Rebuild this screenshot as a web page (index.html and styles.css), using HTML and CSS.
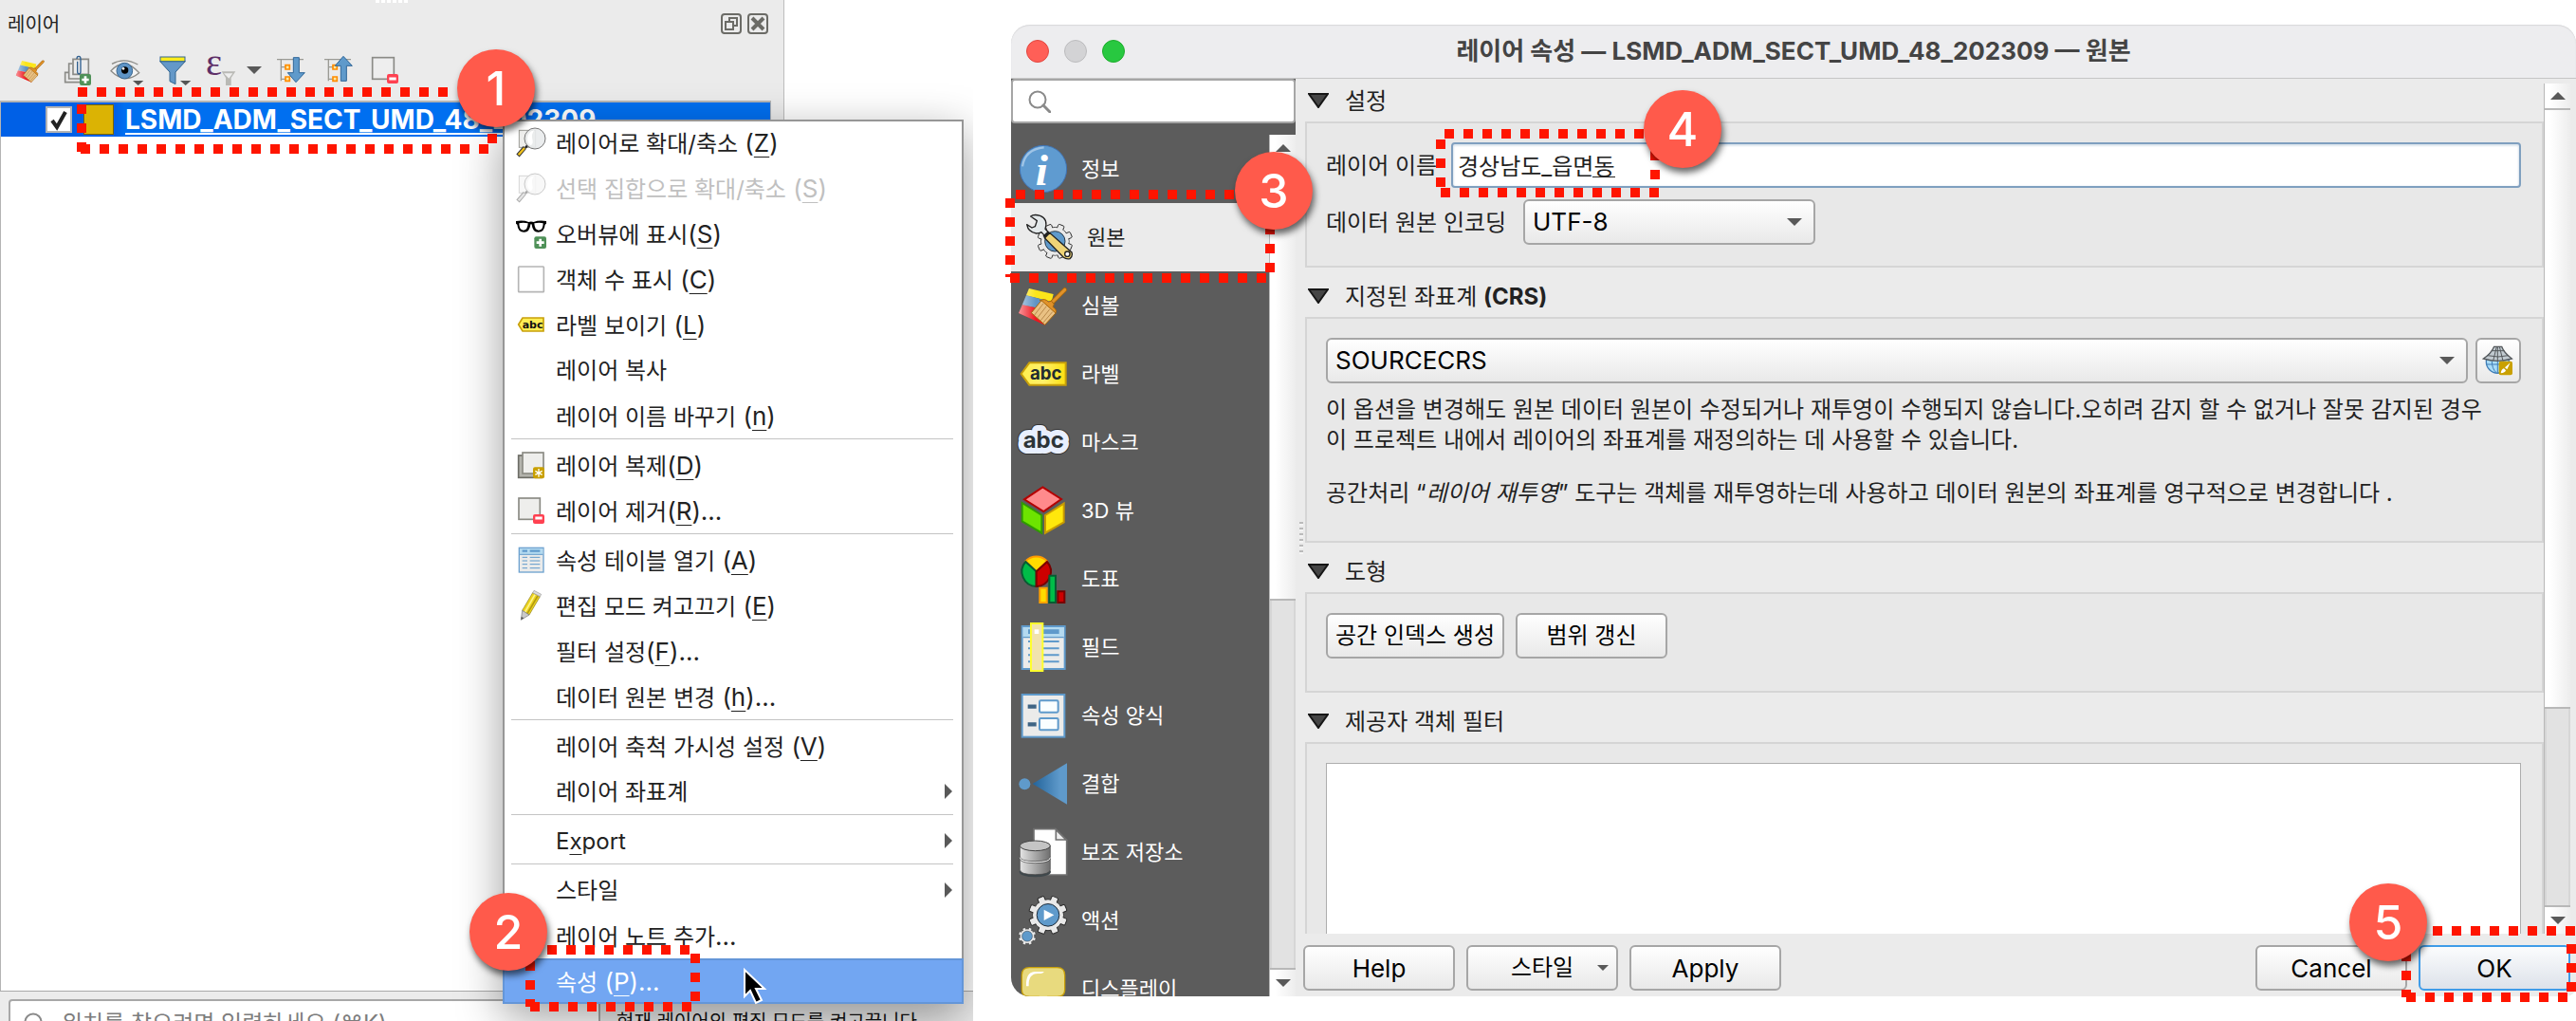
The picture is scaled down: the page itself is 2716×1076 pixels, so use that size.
FILE: index.html
```html
<!DOCTYPE html>
<html lang="ko">
<head>
<meta charset="utf-8">
<title>레이어 속성</title>
<link rel="stylesheet" href="styles.css">
</head>
<body>
<svg class="defs" aria-hidden="true">
  <defs>
    <linearGradient id="g-flag" x1="0" x2="1"><stop offset="0" stop-color="#fff" stop-opacity=".55"/><stop offset=".5" stop-color="#fff" stop-opacity="0"/></linearGradient>
    <linearGradient id="g-tag" x1="0" x2="1"><stop offset="0" stop-color="#fff04d"/><stop offset=".5" stop-color="#fff06a"/><stop offset="1" stop-color="#fce010"/></linearGradient>
    <linearGradient id="g-join" x1="0" x2="1"><stop offset="0" stop-color="#22639a"/><stop offset=".8" stop-color="#5f9acb"/></linearGradient>
    <linearGradient id="g-db" x1="0" x2="1"><stop offset="0" stop-color="#e4e4e4"/><stop offset="1" stop-color="#6e6e6e"/></linearGradient>
    <symbol id="gear" viewBox="-64 -64 128 128" overflow="visible">
      <circle r="50" fill="#e9e9e9" stroke="#2a2a2a" stroke-width="3"/>
      <g fill="#e9e9e9" stroke="#2a2a2a" stroke-width="3">
        <rect x="-11" y="-62" width="22" height="30" rx="4" transform="rotate(22)"/>
        <rect x="-11" y="-62" width="22" height="30" rx="4" transform="rotate(67)"/>
        <rect x="-11" y="-62" width="22" height="30" rx="4" transform="rotate(112)"/>
        <rect x="-11" y="-62" width="22" height="30" rx="4" transform="rotate(157)"/>
        <rect x="-11" y="-62" width="22" height="30" rx="4" transform="rotate(202)"/>
        <rect x="-11" y="-62" width="22" height="30" rx="4" transform="rotate(247)"/>
        <rect x="-11" y="-62" width="22" height="30" rx="4" transform="rotate(292)"/>
        <rect x="-11" y="-62" width="22" height="30" rx="4" transform="rotate(337)"/>
      </g>
      <circle r="48" fill="#e9e9e9"/>
      <circle r="36" fill="#5f9acb" stroke="#1d2a36" stroke-width="3"/>
    </symbol>
    <symbol id="brush" viewBox="0 0 156 156">
      <path d="M33 24 110 42 104 66 24 46Z" fill="#fce51a"/>
      <path d="M24 46 104 66 96 94 12 76Z" fill="#5f93c4"/>
      <path d="M12 76 96 94 84 140 0 102Z" fill="#f0141e"/>
      <path d="M33 24 110 42 84 140 0 102Z" fill="url(#g-flag)"/>
      <path d="M96 78 146 28" stroke="#a8660c" stroke-width="14" stroke-linecap="round"/>
      <path d="M96 78 146 28" stroke="#e0922a" stroke-width="9" stroke-linecap="round"/>
      <path d="M70 62Q82 54 94 66L104 64 112 74 108 82Q124 92 116 104L66 60Z" fill="#e0922a" stroke="#a8660c" stroke-width="3"/>
      <path d="M72 62 117 102 83 139 40 101Z" fill="#e9c183" stroke="#a8660c" stroke-width="3"/>
      <path d="M78 72 50 108M88 80 60 116M98 90 70 125M107 98 78 132" stroke="#b98a4c" stroke-width="3"/>
    </symbol>
    <symbol id="magnifier" viewBox="0 0 96 96">
      <rect x="10" y="10" width="52" height="54" fill="#eeeeec" stroke="#9a9a94" stroke-width="3"/>
      <path d="M37 57 30 65" stroke="#222" stroke-width="7"/>
      <path d="M28 64 6 90" stroke="#333" stroke-width="13"/>
      <path d="M27 66 8 88" stroke="#f2c21c" stroke-width="7"/>
      <circle cx="60" cy="36" r="33" fill="#e9ebec" fill-opacity=".9" stroke="#777" stroke-width="3"/>
      <path d="M36 36a25 25 0 0 1 22-26q-10 12-6 28t-6 20A25 25 0 0 1 36 36Z" fill="#fff"/>
    </symbol>
    <symbol id="glass" viewBox="0 0 24 24"><circle cx="10" cy="10" r="8.500" fill="none" stroke="#8a8a8a" stroke-width="2"/><path d="m16 16 7 7" stroke="#8a8a8a" stroke-width="3" stroke-linecap="round"/></symbol>
    <symbol id="tri" viewBox="0 0 22 16"><path d="M1 1h20L11 15Z" fill="#454545" stroke="#161616" stroke-width="2"/></symbol>
    <symbol id="down" viewBox="0 0 16 8"><path d="M0 0h16L8 8Z" fill="#595959"/></symbol>
    <symbol id="up" viewBox="0 0 16 8"><path d="M0 8h16L8 0Z" fill="#595959"/></symbol>
    <symbol id="right" viewBox="0 0 8 16"><path d="M0 0v16l8-8Z" fill="#595959"/></symbol>
  </defs>
</svg>

<main class="page">
  <section class="qgis">
    <div class="workspace">
      <div class="dock">
        <header class="dock-head">
          <i class="grip"></i>
          <h2>레이어</h2>
          <div class="dock-buttons">
            <button aria-label="분리"><svg viewBox="0 0 22 22"><rect x="1" y="1" width="20" height="20" rx="3" fill="none" stroke="#6b6b66" stroke-width="2"/><path d="M9 9V5h8v8h-3M5 9h8v8H5Z" fill="none" stroke="#6b6b66" stroke-width="2"/></svg></button>
            <button aria-label="닫기"><svg viewBox="0 0 22 22"><rect x="1" y="1" width="20" height="20" rx="3" fill="none" stroke="#6b6b66" stroke-width="2"/><path d="m5 5 12 12M17 5 5 17" stroke="#6b6b66" stroke-width="4"/></svg></button>
          </div>
        </header>
        <div class="toolbar">
          <button aria-label="스타일"><svg viewBox="0 0 96 96"><use href="#brush" x="2" y="4" width="92" height="92"/></svg></button>
          <button aria-label="그룹 추가"><svg viewBox="0 0 96 96"><g fill="none" stroke="#8b8b87" stroke-width="5"><path d="M33 13h49v48H33Z"/><path d="M30 27H20v48h45"/><path d="M18 55H8v31h48"/></g><path d="M47 20v32q0 8 5 8t5-8V12q0-8-6-8t-6 8" fill="none" stroke="#2f5f8f" stroke-width="4"/><rect x="54" y="60" width="36" height="36" rx="6" fill="#4f9158"/><path d="M72 67v22M61 78h22" stroke="#fff" stroke-width="8"/></svg></button>
          <button aria-label="지도 테마"><svg viewBox="0 0 96 96"><path d="M6 28Q45 6 88 30" fill="none" stroke="#8b8b87" stroke-width="4"/><path d="M3 50Q45 4 92 56Q48 94 3 50Z" fill="#f4f4f4" stroke="#8b8b87" stroke-width="4"/><circle cx="46" cy="50" r="25" fill="#5e94c6" stroke="#36648e" stroke-width="3"/><circle cx="47" cy="48" r="11"/><circle cx="42" cy="43" r="4" fill="#fff"/><path d="M72 81h34L89 96Z" fill="#555"/></svg></button>
          <button aria-label="범례 필터"><svg viewBox="0 0 96 96"><path d="M8 20h80L57 54v38l-18-9V54Z" fill="#6498c8" stroke="#33658f" stroke-width="3"/><rect x="9" y="6" width="78" height="14" fill="#fcec1c" stroke="#33658f" stroke-width="3"/><path d="M72 81h34L89 96Z" fill="#555"/></svg></button>
          <div class="split">
            <button aria-label="표현식 필터"><svg viewBox="0 0 96 96"><text x="3" y="62" class="eps">ε</text><path d="M53 52h44L83 72v24H66V72Z" fill="#b9b9b5"/><path d="M60 58h28L76 74Z" fill="#efefef"/></svg></button>
            <button class="mini" aria-label="더 보기"><svg viewBox="0 0 16 8"><use href="#down"/></svg></button>
          </div>
          <button aria-label="모두 펼치기"><svg viewBox="0 0 96 96"><path d="M6 14h84M19 14v68M19 38h14M19 76h14" fill="none" stroke="#9a9a94" stroke-width="4"/><path d="M33 32h13v13H33ZM33 69h13v13H33Z" fill="#fde9a0" stroke="#ff8c00" stroke-width="5"/><path d="M58 8h18v48h18L66 86 40 56h18Z" fill="#5f9acb" stroke="#2f6698" stroke-width="3"/></svg></button>
          <button aria-label="모두 접기"><svg viewBox="0 0 96 96"><path d="M6 14h84M19 14v68M19 38h14M19 76h14" fill="none" stroke="#9a9a94" stroke-width="4"/><path d="M33 32h13v13H33ZM33 69h13v13H33Z" fill="#fde9a0" stroke="#ff8c00" stroke-width="5"/><path d="M58 82h18V34h18L66 4 40 34h18Z" fill="#5f9acb" stroke="#2f6698" stroke-width="3"/></svg></button>
          <button aria-label="레이어 제거"><svg viewBox="0 0 96 96"><rect x="8" y="8" width="68" height="68" fill="#eee" stroke="#8b8b87" stroke-width="5"/><rect x="54" y="60" width="36" height="30" rx="6" fill="#ff4151"/><path d="M61 75h22" stroke="#fff" stroke-width="9"/></svg></button>
        </div>
        <div class="tree">
          <label class="layer-row">
            <span class="check"><input type="checkbox" checked><svg viewBox="0 0 28 28"><path d="m7 15 5 7L21 6" fill="none" stroke="#222" stroke-width="4"/></svg></span>
            <span class="swatch"></span>
            <span class="layer-name">LSMD_ADM_SECT_UMD_48_202309</span>
          </label>
        </div>
      </div>
    </div>
    <footer class="statusbar">
      <div class="locator"><svg viewBox="0 0 24 24"><use href="#glass"/></svg><input type="text" aria-label="위치 찾기" placeholder="위치를 찾으려면 입력하세요 (⌘K)"></div>
      <p>현재 레이어의 편집 모드를 켜고끕니다.</p>
    </footer>

    <svg class="mark mark-1" width="444" height="70" viewBox="0 0 444 70"><path d="M1 5H401M4 65H439" /><path d="M5 18V68"/><path d="M438 49V59"/></svg>

    <div class="menu" role="menu">
      <button role="menuitem"><svg viewBox="0 0 96 96"><use href="#magnifier"/></svg><span>레이어로 확대/축소<kbd> (<u>Z</u>)</kbd></span></button>
      <button role="menuitem" disabled><svg viewBox="0 0 96 96"><use href="#magnifier"/></svg><span>선택 집합으로 확대/축소<kbd> (<u>S</u>)</kbd></span></button>
      <button role="menuitem"><svg viewBox="0 0 96 96"><path d="M0 9q24-4 40 3 8-3 16 0 16-7 40-3v8l-4 3q-2 24-22 24-17 0-20-24-2-4-4 0-3 24-20 24Q6 44 4 20l-4-3Z"/><path d="M10 16q12-4 28 0-1 22-14 22-14 0-14-22ZM58 16q16-4 28 0 0 22-14 22-13 0-14-22Z" fill="#fff"/><rect x="58" y="58" width="38" height="38" rx="6" fill="#4f9158"/><path d="M77 65v24M65 77h24" stroke="#fff" stroke-width="8"/></svg><span>오버뷰에 표시<kbd>(<u>S</u>)</kbd></span></button>
      <button role="menuitem"><svg viewBox="0 0 96 96"><rect x="8" y="9" width="80" height="80" rx="2" fill="#fff" stroke="#b5b5b5" stroke-width="5"/></svg><span>객체 수 표시<kbd> (<u>C</u>)</kbd></span></button>
      <button role="menuitem"><svg viewBox="0 0 96 96"><path d="M8 48 21 27h66v42H21Z" fill="#ffee55" stroke="#c8a00a" stroke-width="5"/><text x="20" y="60" class="abc-sm">abc</text></svg><span>라벨 보이기<kbd> (<u>L</u>)</kbd></span></button>
      <button role="menuitem"><i></i><span>레이어 복사</span></button>
      <button role="menuitem"><i></i><span>레이어 이름 바꾸기<kbd> (<u>n</u>)</kbd></span></button>
      <hr>
      <button role="menuitem"><svg viewBox="0 0 96 96"><rect x="8" y="18" width="72" height="70" fill="#b3b3ac" stroke="#6d6d66" stroke-width="5"/><rect x="21" y="9" width="66" height="66" fill="#eeeeec" stroke="#8b8b84" stroke-width="5"/><rect x="54" y="55" width="36" height="36" rx="6" fill="#c9a000"/><path d="M72 60v26M61 67l22 12M83 67 61 79" stroke="#fff" stroke-width="4"/></svg><span>레이어 복제<kbd>(<u>D</u>)</kbd></span></button>
      <button role="menuitem"><svg viewBox="0 0 96 96"><rect x="9" y="9" width="67" height="67" fill="#eeeeec" stroke="#8b8b84" stroke-width="5"/><rect x="54" y="60" width="36" height="30" rx="6" fill="#ff4151"/><path d="M61 72h22" stroke="#fff" stroke-width="9"/></svg><span>레이어 제거<kbd>(<u>R</u>)...</kbd></span></button>
      <hr>
      <button role="menuitem"><svg viewBox="0 0 96 96"><rect x="10" y="10" width="77" height="77" fill="#ebebea" stroke="#6ea2d0" stroke-width="4"/><rect x="12" y="12" width="73" height="18" fill="#b4daf0"/><path d="M12 31h73" stroke="#5f9acb" stroke-width="3"/><path d="M20 20h16M44 20h32" stroke="#5f9acb" stroke-width="7"/><path d="M20 40h16M44 40h32M20 51h16M44 51h32M20 62h16M44 62h32M20 74h16M44 74h32" stroke="#5f9acb" stroke-width="3"/></svg><span>속성 테이블 열기<kbd> (<u>A</u>)</kbd></span></button>
      <button role="menuitem"><svg viewBox="0 0 96 96"><path d="M53 8 76 20 42 78 20 64Z" fill="#eed51e" stroke="#8a7a16" stroke-width="2"/><path d="M60 14 28 70" stroke="#fff38a" stroke-width="5"/><path d="M69 18 36 74" stroke="#b39a10" stroke-width="5"/><path d="M57 1 80 13 76 20 53 8Z" fill="#ddd" stroke="#999" stroke-width="2"/><path d="M20 64 42 78 16 94Z" fill="#c9c9c9" stroke="#777" stroke-width="2"/><path d="M17 84 25 88 16 94Z" fill="#555"/></svg><span>편집 모드 켜고끄기<kbd> (<u>E</u>)</kbd></span></button>
      <button role="menuitem"><i></i><span>필터 설정<kbd>(<u>F</u>)...</kbd></span></button>
      <button role="menuitem"><i></i><span>데이터 원본 변경<kbd> (<u>h</u>)...</kbd></span></button>
      <hr>
      <button role="menuitem"><i></i><span>레이어 축척 가시성 설정<kbd> (<u>V</u>)</kbd></span></button>
      <button role="menuitem"><i></i><span>레이어 좌표계</span><svg class="sub" viewBox="0 0 8 16"><use href="#right"/></svg></button>
      <hr>
      <button role="menuitem"><i></i><span>E<u>x</u>port</span><svg class="sub" viewBox="0 0 8 16"><use href="#right"/></svg></button>
      <hr>
      <button role="menuitem"><i></i><span>스타일</span><svg class="sub" viewBox="0 0 8 16"><use href="#right"/></svg></button>
      <button role="menuitem"><i></i><span>레이어 노트 추가<kbd>...</kbd></span></button>
      <button role="menuitem" class="active"><i></i><span>속성<kbd> (<u>P</u>)...</kbd></span></button>
      <svg class="mark mark-2" width="184" height="70" viewBox="0 0 184 70"><path d="M23 5H183M5 65H175"/><path d="M5 17V65M179 9V60"/></svg>
      <svg class="cursor" viewBox="0 0 24 38"><path d="M1 1v28l6-6 6 13 6-3-6-12h9Z" stroke="#fff" stroke-width="2"/></svg>
      <b class="step step-2">2</b>
    </div>
    <b class="step step-1">1</b>
  </section>

  <section class="dialog">
    <header class="titlebar">
      <div class="lights"><i class="red"></i><i class="gray"></i><i class="green"></i></div>
      <h1>레이어 속성 — LSMD_ADM_SECT_UMD_48_202309 — 원본</h1>
    </header>
    <div class="dialog-body">
      <aside class="sidebar">
        <div class="search"><svg viewBox="0 0 24 24"><use href="#glass"/></svg><input type="search" aria-label="검색"></div>
        <div class="side-body">
          <nav>
            <button><svg viewBox="0 0 156 156"><circle cx="78" cy="78" r="74" fill="#5f9bd0" stroke="#3f73b4" stroke-width="3"/><path d="M12 70Q20 16 80 10" fill="none" stroke="#9fc4e6" stroke-width="7"/><text x="53" y="129" class="info-i">i</text></svg>정보</button>
            <button class="selected"><svg viewBox="0 0 156 156"><use href="#gear" x="40" y="34" width="114" height="114"/><path d="M8 38Q12 62 38 66 48 66 54 62L72 82 84 70 66 52Q76 20 50 10 30 4 20 12L40 26 34 44 24 48Z" fill="#e3e8ea" stroke="#222" stroke-width="4" stroke-linejoin="round"/><path d="M64 80 80 64 150 126Q154 138 144 146 132 148 124 142Z" fill="#efd477" stroke="#222" stroke-width="4"/><path d="M62 78 78 62" stroke="#222" stroke-width="10"/><circle cx="136" cy="131" r="8" fill="#fff" stroke="#222" stroke-width="4"/></svg>원본</button>
            <button><svg viewBox="0 0 156 156"><use href="#brush"/></svg>심볼</button>
            <button><svg viewBox="0 0 156 156"><path d="M8 78 34 43H149V113H34Z" fill="url(#g-tag)" stroke="#c8a00a" stroke-width="6"/><text x="36" y="97" class="abc">abc</text></svg>라벨</button>
            <button><svg viewBox="0 0 156 156"><text x="14" y="96" class="abc-mask edge">abc</text><text x="14" y="96" class="abc-mask glow">abc</text><text x="14" y="96" class="abc-mask">abc</text></svg>마스크</button>
            <button><svg viewBox="0 0 156 156" stroke-width="6"><path d="M76 4 135 42 79 81 18 43Z" fill="#ff8a8c" stroke="#b40000"/><path d="M11 54 73 93V149L11 112Z" fill="#6de400" stroke="#2f9a00"/><path d="M84 93 143 56V115L84 149Z" fill="#ffe70c" stroke="#c79a00"/></svg>3D 뷰</button>
            <button><svg viewBox="0 0 156 156" stroke-width="6"><path d="M56 55 22 22A47 47 0 0 1 90 22Z" fill="#ffdc00" stroke="#ff9a00"/><path d="M56 55 22 24A47 47 0 0 0 56 102Z" fill="#00bd48" stroke="#085c33"/><path d="M56 55 90 24A47 47 0 0 1 56 102Z" fill="#cc0000" stroke="#700"/><path d="M67 107h22v46H67Z" fill="#ffdc00" stroke="#ffa200"/><path d="M97 68h20v85H97Z" fill="#00bd48" stroke="#085c33"/><path d="M124 118h21v35H124Z" fill="#cc0000" stroke="#700"/></svg>도표</button>
            <button><svg viewBox="0 0 156 156"><rect x="11" y="12" width="135" height="135" fill="#ebebea" stroke="#5f9acb" stroke-width="6"/><rect x="14" y="15" width="129" height="30" fill="#b4daf0"/><path d="M14 47h129" stroke="#5f9acb" stroke-width="4"/><path d="M30 29h98" stroke="#5f9acb" stroke-width="14"/><path d="M30 60h98M30 82h98M30 103h98M30 124h98" stroke="#5f9acb" stroke-width="6"/><rect x="39" y="3" width="37" height="150" fill="#f1e3ad" stroke="#ffff2c" stroke-width="6"/><rect x="50" y="22" width="14" height="14" fill="#fff"/></svg>필드</button>
            <button><svg viewBox="0 0 156 156"><rect x="11" y="12" width="134" height="134" fill="#ebebea" stroke="#5f9acb" stroke-width="6"/><path d="M29 50h27M29 106h27" stroke="#3f6484" stroke-width="13"/><rect x="66" y="31" width="59" height="37" rx="4" fill="#fafeff" stroke="#5f9acb" stroke-width="6"/><rect x="66" y="87" width="59" height="37" rx="4" fill="#fafeff" stroke="#5f9acb" stroke-width="6"/></svg>속성 양식</button>
            <button><svg viewBox="0 0 156 156"><circle cx="19" cy="79" r="18" fill="#5f9acb"/><path d="M44 78 153 13V143Z" fill="url(#g-join)"/></svg>결합</button>
            <button><svg viewBox="0 0 156 156"><path d="M48 5h69l35 35v110H48Z" fill="#fff" stroke="#707070" stroke-width="5"/><path d="M118 7v32h32Z" fill="#eee" stroke="#707070" stroke-width="5"/><ellipse cx="52" cy="140" rx="50" ry="17" fill="#3f484c"/><path d="M4 58v75q0 16 48 16t48-16V58Z" fill="url(#g-db)" stroke="#444" stroke-width="2"/><path d="M4 92q0 15 48 15t48-15M4 98q0 15 48 15t48-15" fill="none" stroke="#444" stroke-width="2"/><path d="M4 95q0 15 48 15t48-15" fill="none" stroke="#eee" stroke-width="3"/><ellipse cx="52" cy="58" rx="48" ry="16" fill="#c4c4c4" stroke="#444" stroke-width="3"/></svg>보조 저장소</button>
            <button><svg viewBox="0 0 156 156"><use href="#gear" x="30" y="-2" width="126" height="126"/><path d="M80 44v34l32-17Z" fill="#fff"/><use href="#gear" x="-2" y="99" width="58" height="58"/></svg>액션</button>
            <button><svg viewBox="0 0 156 156"><path d="M34 11h88q24 0 24 24v46q0 22-24 22H92l-14 24-14-24H34q-24 0-24-22V35q0-24 24-24Z" fill="#e8da7e" stroke="#c8a00a" stroke-width="4"/><path d="M24 70q-2-44 26-46h30q-2 6-16 6-34-2-32 40Z" fill="#fff"/></svg>디스플레이</button>
          </nav>
          <div class="scroll side-scroll"><span class="arrow-cell"><svg viewBox="0 0 16 8"><use href="#up"/></svg></span><i class="free"></i><i class="thumb"></i><span class="arrow-cell"><svg viewBox="0 0 16 8"><use href="#down"/></svg></span></div>
        </div>
        <svg class="mark mark-3" width="286" height="100" viewBox="0 0 286 100"><path d="M11 5H241M5 93H275"/><path d="M5 9V92M279 37V89"/></svg>
        <b class="step step-3">3</b>
      </aside>
      <div class="splitter"><i></i></div>
      <div class="main">
        <div class="scroll-area">
          <form class="sections" id="props">
            <button type="button" class="section-head"><svg viewBox="0 0 22 16"><use href="#tri"/></svg><span>설정</span></button>
            <fieldset>
              <div class="row">
                <label class="label-short" for="lname">레이어 이름</label>
                <div class="name-field"><input id="lname" type="text" value="경상남도_읍면동"><i></i>
                  <svg class="mark mark-4" width="236" height="72" viewBox="0 0 236 72"><path d="M9 5H229M5 67H236"/><path d="M5 11V62M231 23V54"/></svg>
                  <b class="step step-4">4</b>
                </div>
              </div>
              <div class="row">
                <label class="label-long" for="enc">데이터 원본 인코딩</label>
                <div class="select encoding"><select id="enc"><option>UTF-8</option></select><svg viewBox="0 0 16 8"><use href="#down"/></svg></div>
              </div>
            </fieldset>
            <button type="button" class="section-head"><svg viewBox="0 0 22 16"><use href="#tri"/></svg><span>지정된 좌표계 <b>(CRS)</b></span></button>
            <fieldset class="crs">
              <div class="row tight">
                <div class="select grow"><select aria-label="좌표계"><option>SOURCECRS</option></select><svg viewBox="0 0 16 8"><use href="#down"/></svg></div>
                <button type="button" class="btn square" aria-label="좌표계 선택"><svg viewBox="0 0 96 96"><circle cx="46" cy="52" r="36" fill="#a9dcf8" stroke="#3f7db6" stroke-width="4"/><path d="M12 60h70M46 50v38M28 50q0 24 14 36M64 50q0 24-14 36" fill="none" stroke="#3f7db6" stroke-width="3"/><path d="M35 4h24Q66 24 91 42 46 56 1 42 26 26 35 4Z" fill="#c1cad0" stroke="#55595c" stroke-width="4"/><path d="M27 17h40M14 32q34 8 66 0M43 4 32 49M52 4 63 49M46 4v46" fill="none" stroke="#55595c" stroke-width="3"/><rect x="50" y="50" width="43" height="44" rx="6" fill="#c9a000"/><path d="M56 88q2-14 10-15l6 6q-2 8-16 9ZM69 70 86 55 76 76Z" fill="#fff"/></svg></button>
              </div>
              <p>이 옵션을 변경해도 원본 데이터 원본이 수정되거나 재투영이 수행되지 않습니다.오히려 감지 할 수 없거나 잘못 감지된 경우<br>이 프로젝트 내에서 레이어의 좌표계를 재정의하는 데 사용할 수 있습니다.</p>
              <p>공간처리 “<em>레이어 재투영</em>” 도구는 객체를 재투영하는데 사용하고 데이터 원본의 좌표계를 영구적으로 변경합니다 .</p>
            </fieldset>
            <button type="button" class="section-head"><svg viewBox="0 0 22 16"><use href="#tri"/></svg><span>도형</span></button>
            <fieldset class="geom">
              <div class="row">
                <button type="button" class="btn wide">공간 인덱스 생성</button>
                <button type="button" class="btn">범위 갱신</button>
              </div>
            </fieldset>
            <button type="button" class="section-head"><svg viewBox="0 0 22 16"><use href="#tri"/></svg><span>제공자 객체 필터</span></button>
            <fieldset class="filter"><textarea aria-label="제공자 객체 필터"></textarea></fieldset>
          </form>
          <div class="scroll main-scroll"><span class="arrow-cell"><svg viewBox="0 0 16 8"><use href="#up"/></svg></span><i class="free"></i><i class="thumb"></i><span class="arrow-cell"><svg viewBox="0 0 16 8"><use href="#down"/></svg></span></div>
        </div>
        <footer class="actions">
          <button class="btn latin">Help</button>
          <button class="btn">스타일<svg class="caret" viewBox="0 0 16 8"><use href="#down"/></svg></button>
          <button class="btn latin">Apply</button>
          <span class="spacer"></span>
          <button class="btn latin">Cancel</button>
          <button class="btn latin primary">OK</button>
          <svg class="mark mark-5" width="184" height="80" viewBox="0 0 184 80"><path d="M33 5H184M5 75H175"/><path d="M5 27V75M179 19V69"/></svg>
          <b class="step step-5">5</b>
        </footer>
      </div>
    </div>
  </section>
</main>
</body>
</html>
```
FILE: styles.css
```css
* { box-sizing: border-box; }
body {
  margin: 0;
  background: #fff;
  color: #222;
  font: 24px/32px Inter, "Noto Sans CJK KR", sans-serif;
  overflow: hidden;
}
button, input, select, textarea { font: inherit; color: inherit; margin: 0; }
button { border: 0; background: none; padding: 0; }
h1, h2, p { margin: 0; }
svg { display: block; flex: none; overflow: visible; }
.defs { position: absolute; width: 0; height: 0; }

.page {
  display: grid;
  grid-template-columns: minmax(0, 1026fr) minmax(0, 1650fr);
  gap: 40px;
  height: 100vh;
}

/* Main window with the layer panel */
.qgis {
  position: relative;
  display: flex;
  flex-direction: column;
  overflow: hidden;
}
.workspace {
  flex: 1;
  min-height: 0;
  display: grid;
  grid-template-columns: 827fr 199fr;
}
.dock {
  display: flex;
  flex-direction: column;
  background: #ebebeb;
  border-right: 1px solid #bdbdbd;
}
.dock-head {
  position: relative;
  display: flex;
  align-items: center;
  justify-content: space-between;
  height: 50px;
  padding: 0 16px 0 8px;
}
.dock-head h2 { font-size: 20px; font-weight: 400; padding-top: 2px; }
.dock-buttons { display: flex; gap: 6px; }
.dock-buttons svg { width: 22px; height: 22px; }
.grip {
  position: absolute;
  top: 0;
  left: 48%;
  width: 34px;
  height: 3px;
  background: repeating-linear-gradient(90deg, #fff 0 4px, #ebebeb 4px 6px);
}
.toolbar {
  display: flex;
  align-items: center;
  gap: 18px;
  height: 48px;
  margin-bottom: 8px;
  padding-left: 16px;
}
.toolbar svg { width: 32px; height: 32px; }
.split { display: flex; align-items: center; gap: 12px; width: 56px; }
.toolbar .mini svg { width: 16px; height: 8px; }
.eps { font: 122px "Liberation Serif", serif; fill: #5e2f68; }
.tree {
  flex: 1;
  margin-right: 13px;
  background: #fff;
  border: 1px solid #b4b4b4;
  border-top-width: 2px;
  border-bottom: 0;
}
.layer-row {
  display: flex;
  align-items: center;
  height: 36px;
  padding-left: 47px;
  background: linear-gradient(90deg, #0060e6 120px, #006ff0 130px, #006ff0);
  color: #fff;
}
.check { position: relative; width: 28px; height: 28px; }
.check input {
  appearance: none;
  display: block;
  width: 28px;
  height: 28px;
  background: #fff;
  border: 2px solid #b4b4b4;
}
.check svg { position: absolute; inset: 0; }
.swatch { width: 32px; height: 32px; margin: 0 12px; background: #dbb304; border: 1px solid #7a6400; }
.layer-name {
  font-size: 28px;
  font-weight: 700;
  text-decoration: underline;
  text-decoration-thickness: 2px;
  text-underline-offset: 4px;
  white-space: nowrap;
}
.statusbar {
  display: flex;
  gap: 17px;
  height: 32px;
  padding: 8px 0 0 9px;
  border-top: 1px solid #aaa;
  background: #ececec;
  color: #111;
}
.locator {
  display: flex;
  align-items: center;
  gap: 16px;
  flex: 0 0 624px;
  height: 52px;
  padding-left: 14px;
  background: #fff;
  border: 2px solid #a8a8a8;
  border-radius: 4px;
}
.locator svg { width: 24px; height: 24px; }
.locator input { flex: 1; border: 0; padding: 0; background: none; }
.locator input::placeholder { color: #7d7d7d; opacity: 1; }
.statusbar p { font-size: 20px; line-height: 48px; white-space: nowrap; }

/* Context menu */
.menu {
  position: absolute;
  left: 530px;
  top: 126px;
  width: 486px;
  background: #fff;
  box-shadow: 0 14px 44px rgba(0, 0, 0, .38);
}
.menu::after {
  content: "";
  position: absolute;
  inset: 0;
  border: 2px solid #969696;
  border-bottom: 0;
  pointer-events: none;
}
.menu button {
  display: flex;
  align-items: center;
  gap: 10px;
  width: 100%;
  height: 48px;
  padding: 0 12px 0 14px;
  text-align: left;
}
.menu button > svg, .menu button > i { width: 32px; height: 32px; }
.menu button span { flex: 1; padding-top: 2px; white-space: nowrap; }
.menu kbd { font-family: inherit; font-size: 26px; }
.menu button .sub { width: 8px; height: 16px; }
.menu button:disabled { color: #c0c0c0; }
.menu button:disabled svg { opacity: .4; filter: grayscale(1); }
.menu u {
  text-decoration-thickness: 1px;
  text-underline-offset: 5px;
}
.menu hr {
  height: 4px;
  margin: 0 11px 0 9px;
  border: 0;
  border-top: 1px solid #c4c4c4;
}
.menu .active {
  position: relative;
  z-index: 1;
  background: #72a6f2;
  border: 2px solid #6496d8;
  padding-left: 12px;
  color: #fff;
}
.cursor { position: absolute; z-index: 2; left: 254px; top: 895px; width: 24px; height: 38px; }

/* Red dotted frames and numbered steps */
.mark { position: absolute; z-index: 3; pointer-events: none; }
.mark path { fill: none; stroke: #ff1500; stroke-width: 10; stroke-dasharray: 10 10; }
.mark-1 { left: 81px; top: 92px; }
.mark-2 { left: 24px; top: 870px; }
.mark-3 { left: -6px; top: 117px; }
.mark-4 { left: -16px; top: -14px; }
.mark-5 { right: 0; top: -8px; }
.step {
  position: absolute;
  z-index: 4;
  width: 82px;
  height: 82px;
  border-radius: 50%;
  background: #ff5a4b;
  color: #fff;
  font-size: 50px;
  font-weight: 500;
  line-height: 82px;
  text-align: center;
  box-shadow: 2px 5px 7px rgba(0, 0, 0, .6);
}
.step-1 { left: 482px; top: 52px; }
.step-2 { left: -35px; top: 815px; }
.step-3 { left: 236px; top: 77px; }
.step-4 { left: 203px; top: -55px; }
.step-5 { right: 157px; top: -53px; }

/* Properties dialog */
.dialog {
  display: flex;
  flex-direction: column;
  height: calc(100vh - 52px);
  margin-top: 26px;
  border-radius: 20px 20px 10px 20px;
  background: #ebebeb;
}
.titlebar {
  position: relative;
  display: flex;
  align-items: center;
  justify-content: center;
  height: 57px;
  background: #ededef;
  border-bottom: 1px solid #c6c6c6;
  border-radius: 20px 20px 0 0;
  box-shadow: inset 0 1px 1px #d8d8da;
}
.titlebar h1 { font-size: 26px; font-weight: 700; color: #444; white-space: nowrap; }
.lights { position: absolute; left: 16px; top: 16px; display: flex; gap: 16px; }
.lights i { width: 24px; height: 24px; border-radius: 50%; }
.red { background: #ff5f57; border: 1px solid #e2463f; }
.gray { background: #d3d3d5; border: 1px solid #bcbcbe; }
.green { background: #28c840; border: 1px solid #1dad2b; }
.dialog-body { flex: 1; min-height: 0; display: flex; }

.sidebar {
  position: relative;
  flex: 0 0 300px;
  min-width: 0;
  display: flex;
  flex-direction: column;
  background: #5c5c5c;
  border-bottom-left-radius: 20px;
}
.search {
  display: flex;
  align-items: center;
  height: 47px;
  margin-bottom: 12px;
  padding-left: 16px;
  background: #fff;
  border: 2px solid #a6a6a6;
  border-radius: 4px;
}
.search svg { width: 24px; height: 24px; }
.search input { flex: 1; min-width: 0; border: 0; background: none; outline: 0; }
.side-body { flex: 1; min-height: 0; display: flex; }
.sidebar nav { flex: 1; min-width: 0; overflow: hidden; border-bottom-left-radius: 20px; }
.sidebar nav button {
  display: flex;
  align-items: center;
  gap: 14px;
  width: 100%;
  height: 72px;
  padding-left: 8px;
  color: #fff;
  font-size: 22px;
  white-space: nowrap;
}
.sidebar nav svg { width: 52px; height: 52px; }
.sidebar nav .selected { padding-left: 14px; background: #ebebeb; color: #222; }
.info-i { font: italic 700 142px "Liberation Serif", serif; fill: #fff; }
.abc { font: 700 56px Inter, sans-serif; fill: #222c30; }
.abc-sm { font: 600 33px "DejaVu Sans", sans-serif; fill: #111; }
.abc-mask { font: 700 72px Inter, sans-serif; fill: #2c3438; stroke-linejoin: round; }
.edge { stroke: #333; stroke-width: 42; }
.glow { stroke: #e8efff; stroke-width: 36; }

.scroll {
  display: flex;
  flex-direction: column;
  flex: 0 0 28px;
  border-left: 1px solid #b8b8b8;
  background: linear-gradient(90deg, #fff 20%, #ededed);
}
.arrow-cell { display: flex; align-items: center; justify-content: center; height: 28px; }
.arrow-cell svg { width: 16px; height: 8px; }
.thumb {
  background: #e2e2e2;
  border: solid #b8b8b8;
  border-width: 2px 0;
  box-shadow: inset 2px 0 #d6d6d6, inset -2px 0 #d6d6d6;
}
.side-scroll .free { flex: 463; }
.side-scroll .thumb { flex: 389; }
.main-scroll { margin-top: 5px; }
.main-scroll .arrow-cell:first-child { border-bottom: 2px solid #b8b8b8; }
.main-scroll .free { flex: 633; }
.main-scroll .thumb { flex: 208; }

.splitter { flex: 0 0 8px; display: flex; align-items: center; justify-content: flex-end; }
.splitter i { width: 4px; height: 34px; background: repeating-linear-gradient(#bbb 0 2px, #f4f4f4 2px 4px, #ebebeb 4px 6px); }

.main { flex: 1; min-width: 0; display: flex; flex-direction: column; padding-right: 6px; }
.scroll-area { flex: 1; min-height: 0; display: flex; }
.sections { flex: 1; min-width: 0; overflow: hidden; padding: 1px 0 0 2px; }
.section-head {
  display: flex;
  align-items: center;
  gap: 17px;
  height: 44px;
  padding-left: 3px;
}
.section-head svg { width: 22px; height: 16px; }
.section-head span { padding-top: 2px; }
fieldset {
  min-width: 0;
  margin: 0 0 8px;
  padding: 20px 22px 22px 20px;
  border: 2px solid #d5d5d5;
  background: #e8e8e8;
}
.row { display: flex; align-items: center; gap: 12px; }
.row + .row { margin-top: 12px; }
.row label { padding-top: 2px; white-space: nowrap; }
.row .label-short { flex: 0 0 120px; }
.row .label-long { flex: 0 0 196px; }
.tight { gap: 8px; }
.name-field { position: relative; flex: 1; }
.name-field input {
  display: block;
  width: 100%;
  height: 48px;
  padding: 0 5px 2px;
  border: 2px solid #7f9fbf;
  border-radius: 4px;
  background: #fff;
  box-shadow: inset 0 1px 2px 1px #dde6ee;
}
.name-field > i { position: absolute; left: 149px; top: 36px; width: 24px; height: 1px; background: #222; }
.select { position: relative; }
.select select, .btn {
  height: 48px;
  border: 2px solid #a6a6a6;
  border-radius: 6px;
  background: linear-gradient(#fff, #e9e9e9);
  color: #000;
}
.select select { appearance: none; display: block; width: 100%; padding: 0 8px; font-size: 26px; }
.select svg { position: absolute; right: 14px; top: 20px; width: 16px; height: 8px; pointer-events: none; }
.encoding { width: 308px; }
.grow { flex: 1; }
.btn { position: relative; display: flex; align-items: center; justify-content: center; width: 160px; white-space: nowrap; }
.btn.wide { width: 188px; }
.btn.square { width: 48px; }
.btn.square svg { width: 32px; height: 32px; }
.btn.latin { font-size: 26px; padding-top: 2px; }
.btn.primary { border-color: #3f9ce8; background: linear-gradient(#fbfcfd, #dde2ea); }
.caret { position: absolute; right: 8px; top: 19px; width: 12px; height: 6px; }
.crs { padding-bottom: 34px; }
.crs p { margin-top: 12px; white-space: nowrap; }
.crs p + p { margin-top: 24px; }
.geom { padding-bottom: 34px; }
.filter textarea {
  display: block;
  width: 100%;
  height: 240px;
  border: 1px solid #adadad;
  background: #fff;
  resize: none;
}
.actions { position: relative; display: flex; gap: 12px; padding: 12px 0 6px; margin-right: -6px; padding-right: 6px; }
.spacer { flex: 1; }
```
